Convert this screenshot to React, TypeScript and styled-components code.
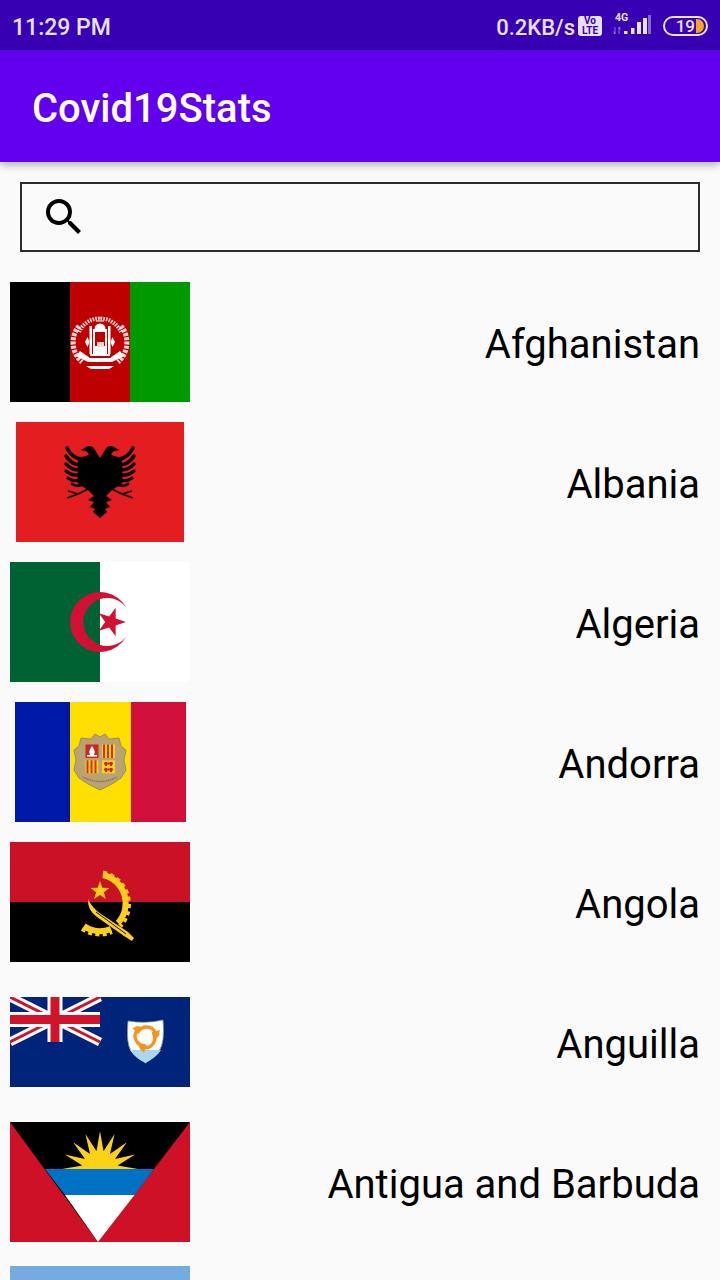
import React from "react";
import styled, { createGlobalStyle } from "styled-components";

const Global = createGlobalStyle`
  html, body { margin: 0; padding: 0; width: 720px; height: 1280px; overflow: hidden; background: #fafafa; }
  #root { width: 720px; height: 1280px; overflow: hidden; }
`;

const Screen = styled.div`
  width: 720px;
  height: 1280px;
  overflow: hidden;
  display: flex;
  flex-direction: column;
  background: #fafafa;
  font-family: Roboto, "Liberation Sans", sans-serif;
`;
const StatusBar = styled.div`
  height: 50px;
  flex: none;
  background: #3700b3;
  color: #e9e0f9;
  display: flex;
  align-items: center;
  justify-content: space-between;
  padding: 4px 12px 0 12px;
  box-sizing: border-box;
  font-size: 23px;
  font-weight: 500;
`;
const StatusRight = styled.div`
  display: flex;
  align-items: center;
  margin-top: -3px;
`;
const Speed = styled.span`
  font-size: 22px;
  margin-top: 3px;
`;
const VoLte = styled.div`
  width: 24px;
  height: 20px;
  margin-left: 3px;
  background: #e9e0f9;
  color: #3700b3;
  border-radius: 3px;
  display: flex;
  flex-direction: column;
  align-items: center;
  justify-content: center;
  font-size: 10px;
  line-height: 9.5px;
  font-weight: 700;
`;
const Signal = styled.div`
  width: 40px;
  height: 30px;
  margin-left: 10px;
  position: relative;
`;
const FourG = styled.span`
  position: absolute;
  left: 3px;
  top: 2px;
  font-size: 10.5px;
  line-height: 10px;
  font-weight: 700;
`;
const Battery = styled.div`
  width: 45px;
  height: 20px;
  margin-left: 11px;
  box-sizing: border-box;
  border: 2px solid #e9e0f9;
  border-radius: 10px;
  display: flex;
  align-items: center;
  justify-content: flex-end;
  padding-right: 2px;
  font-size: 17px;
  font-weight: 500;
  line-height: 16px;
`;
const BatteryCap = styled.div`
  width: 8px;
  height: 14px;
  margin-left: 1px;
  background: #f5a623;
  border-radius: 0 7px 7px 0;
`;
const AppBar = styled.header`
  height: 112px;
  flex: none;
  background: #6200ee;
  color: #fff;
  display: flex;
  align-items: center;
  padding: 4px 0 0 32px;
  box-sizing: border-box;
  font-size: 40px;
  font-weight: 500;
  box-shadow: 0 3px 8px rgba(0, 0, 0, 0.3);
  position: relative;
`;
const SearchBox = styled.div`
  flex: none;
  width: 680px;
  height: 70px;
  margin: 20px 0 20px 20px;
  box-sizing: border-box;
  border: 2px solid #2b2b2b;
  display: flex;
  align-items: center;
  padding-left: 18px;
`;
const List = styled.div`
  display: flex;
  flex-direction: column;
`;
const Row = styled.div`
  height: 140px;
  flex: none;
  display: flex;
  align-items: center;
  justify-content: space-between;
  padding: 0 20px 0 10px;
`;
const FlagSlot = styled.div`
  width: 180px;
  height: 120px;
  display: flex;
  align-items: center;
  justify-content: center;
  flex: none;
`;
const Name = styled.span`
  font-size: 40px;
  color: #000;
  line-height: 48px;
  position: relative;
  top: 3px;
`;

const Afghanistan = () => (
  <svg width="180" height="120" viewBox="0 0 180 120">
    <rect width="60" height="120" fill="#000" />
    <rect x="60" width="60" height="120" fill="#be0000" />
    <rect x="120" width="60" height="120" fill="#009900" />
    <path d="M69 50 A23 23 0 0 1 111 50" fill="none" stroke="#fff" strokeWidth="4" strokeDasharray="1.6 1.1" opacity="0.85" />
    <path d="M69 44 A26 26 0 0 0 72 80" fill="none" stroke="#fff" strokeWidth="5" strokeDasharray="3 1.2" opacity="0.85" />
    <path d="M111 44 A26 26 0 0 1 108 80" fill="none" stroke="#fff" strokeWidth="5" strokeDasharray="3 1.2" opacity="0.85" />
    <path d="M66 74 L78 80 L102 80 L114 74 L110 69 L100 76 L80 76 L70 69Z" fill="#fff" />
    <path d="M76 84 H104 L99 87 H81Z" fill="#fff" />
    <path d="M84.5 47 a5.5 5.5 0 0 1 11 0Z" fill="#fff" />
    <rect x="83" y="47" width="14" height="25" fill="#fff" />
    <rect x="85" y="50" width="10" height="14" fill="#be0000" />
    <rect x="87" y="60" width="7" height="5" fill="#f0d8d0" />
    <rect x="79.5" y="44" width="2.5" height="28" fill="#fff" />
    <rect x="98" y="44" width="2.5" height="28" fill="#fff" />
    <path d="M75 60 l2.5 -5 l2 5 l-2 5Z M105 60 l-2.5 -5 l-2 5 l2 5Z" fill="#fff" />
    <path d="M86 39 h8 M88 36 h4" stroke="#fff" strokeWidth="1.1" />
    <rect x="80" y="72" width="20" height="2" fill="#fff" />
  </svg>
);

const EagleHalf = () => (
  <g>
    <path d="M84 36 L89 28 Q91 23.5 96 24 L103.5 28 L97 29.5 L95 33 L102 35 L106 38 L106.5 61 L96 68 L90 74 L96 78 L90 80 L94 85 L89 87 L91 90 L84 96Z" fill="#000" />
    <g fill="none" stroke="#000" strokeLinecap="round">
      <path d="M103 37 Q112 36 117 26" strokeWidth="3.6" />
      <path d="M105 43 Q113 42 118 34" strokeWidth="3.4" />
      <path d="M105 48 Q113 48 118 42" strokeWidth="3.4" />
      <path d="M105 53 Q112 54 118 49" strokeWidth="3.2" />
      <path d="M105 58 Q111 60 116 56" strokeWidth="3" />
      <path d="M102 63 Q108 65 112 62" strokeWidth="2.8" />
    </g>
    <path d="M94 66 L106 72 L116 69 M106 72 L117 76" fill="none" stroke="#000" strokeWidth="1.8" />
  </g>
);

const Albania = () => (
  <svg width="168" height="120" viewBox="0 0 168 120">
    <rect width="168" height="120" fill="#e41e20" />
    <EagleHalf />
    <g transform="translate(168 0) scale(-1 1)">
      <EagleHalf />
    </g>
  </svg>
);

const starPoints = (cx: number, cy: number, r: number, inner: number, start: number) =>
  Array.from({ length: 10 }, (_, i) => {
    const a = start + (i * Math.PI) / 5;
    const q = i % 2 ? inner : r;
    return `${(cx + q * Math.cos(a)).toFixed(2)},${(cy + q * Math.sin(a)).toFixed(2)}`;
  }).join(" ");

const Algeria = () => (
  <svg width="180" height="120" viewBox="0 0 180 120">
    <rect width="180" height="120" fill="#fff" />
    <rect width="90" height="120" fill="#006233" />
    <path d="M116 45 A30 30 0 1 0 116 75 A24 24 0 1 1 116 45Z" fill="#d21034" />
    <polygon points={starPoints(101, 60, 15, 5.8, 0)} fill="#d21034" />
  </svg>
);

const Andorra = () => (
  <svg width="171" height="120" viewBox="0 0 171 120">
    <rect width="55" height="120" fill="#0018a8" />
    <rect x="55" width="61" height="120" fill="#fedf00" />
    <rect x="116" width="55" height="120" fill="#d0103a" />
    <path d="M76 37 L80 32 L85 35 L90 32 L94 37 L104 36 L106 44 L111 48 L109 58 L111 68 L106 76 L97 82 L85 88 L73 82 L64 76 L59 68 L61 58 L59 48 L64 44 L66 36Z" fill="#b9a374" stroke="#8f7f5a" strokeWidth="0.8" />
    <rect x="70.5" y="42.5" width="13" height="13.5" fill="#c8281e" />
    <path d="M77 44 Q81 49 79 53 H75 Q73 49 77 44Z" fill="#fff" />
    <rect x="72" y="53" width="10" height="1.6" fill="#fff" />
    <rect x="87" y="42.5" width="13" height="13.5" fill="#fcd116" />
    <path d="M89 42.5 V56 M93 42.5 V56 M97 42.5 V56" stroke="#d0301e" strokeWidth="2" />
    <rect x="70.5" y="58.3" width="13" height="13" fill="#fcd116" />
    <path d="M72.5 58.3 V71.3 M76.5 58.3 V71.3 M80.5 58.3 V71.3" stroke="#d0301e" strokeWidth="2" />
    <rect x="87" y="58.3" width="13" height="13" fill="#fcd116" />
    <path d="M89 61.5 H98 M91 60 V64 M96 60 V64 M89 67.5 H98 M91 66 V70 M96 66 V70" stroke="#c8281e" strokeWidth="2" />
    <path d="M68 75 Q85 84 102 75" fill="none" stroke="#7f7050" strokeWidth="1.4" strokeDasharray="1.5 .8" />
  </svg>
);

const Angola = () => (
  <svg width="180" height="120" viewBox="0 0 180 120">
    <rect width="180" height="60" fill="#cb1126" />
    <rect y="60" width="180" height="60" fill="#000" />
    <g fill="none" stroke="#ffcd1c">
      <path d="M93 33 A29 29 0 0 1 108 81" strokeWidth="6" />
      <path d="M93 31 A32 32 0 0 1 110 84" strokeWidth="5" strokeDasharray="4 3.2" />
      <path d="M74 84 A28 28 0 0 0 101 87" strokeWidth="6" />
      <path d="M72 87 A32 32 0 0 0 102 90" strokeWidth="4" strokeDasharray="4 3.2" />
    </g>
    <polygon points={starPoints(90, 49, 10, 4, -Math.PI / 2)} fill="#ffcd1c" />
    <path d="M78 57 Q77 68 87 75 L114 94 L122 99 L124 96 L118 90 L91 72 Q82 66 78 57Z" fill="#ffcd1c" />
    <path d="M86 70 L116 92" stroke="#000" strokeWidth="0.9" />
  </svg>
);

const Dolphin = () => (
  <g>
    <path d="M128 35 Q133 28 141 31 Q145 33 146 38" fill="none" stroke="#f7941e" strokeWidth="3.4" strokeLinecap="round" />
    <path d="M144 35 L150 33 L148 40 L145 41Z M129 33 L125 29 L132 30Z" fill="#f7941e" />
  </g>
);

const Anguilla = () => (
  <svg width="180" height="90" viewBox="0 0 180 90">
    <rect width="180" height="90" fill="#00247a" />
    <path d="M0 0 L90 45 M90 0 L0 45" stroke="#fff" strokeWidth="9" />
    <path d="M0 0 L45 22.5 M45 22.5 L90 45 M90 0 L45 22.5 M45 22.5 L0 45" stroke="#cf142b" strokeWidth="3" />
    <rect x="37.5" width="15" height="45" fill="#fff" />
    <rect y="15" width="90" height="15" fill="#fff" />
    <rect x="40.5" width="9" height="45" fill="#cf142b" />
    <rect y="18" width="90" height="9" fill="#cf142b" />
    <path d="M118 24 Q136 27 153 23 Q155 46 149 54 Q144 61 135.5 66 Q126 61 121 54 Q116 46 118 24Z" fill="#fff" stroke="#7f9a7f" strokeWidth="0.8" />
    <path d="M120 53 H151 Q146 61 135.5 65.5 Q125 61 120 53Z" fill="#a8d8f0" />
    <Dolphin />
    <g transform="rotate(120 135.5 40)"><Dolphin /></g>
    <g transform="rotate(240 135.5 40)"><Dolphin /></g>
  </svg>
);

const sunPoints = Array.from({ length: 17 }, (_, i) => {
  const a = Math.PI + (i * Math.PI) / 16;
  const q = i % 2 ? 18 : 38;
  return `${(90 + q * Math.cos(a)).toFixed(2)},${(47 + q * Math.sin(a)).toFixed(2)}`;
}).join(" ");

const Antigua = () => (
  <svg width="180" height="120" viewBox="0 0 180 120">
    <rect width="180" height="120" fill="#ce1126" />
    <polygon points="0,0 180,0 88,120" fill="#000" />
    <polygon points={sunPoints} fill="#fcd116" />
    <polygon points="35,47 144,47 124.5,73 55,73" fill="#0072c6" />
    <polygon points="55,73 124.5,73 88,120" fill="#fff" />
  </svg>
);

const Argentina = () => (
  <svg width="180" height="113" viewBox="0 0 180 113">
    <rect width="180" height="38" fill="#74acdf" />
    <rect y="38" width="180" height="37" fill="#fff" />
    <rect y="75" width="180" height="38" fill="#74acdf" />
  </svg>
);

const countries: { name?: string; flag: React.ReactNode }[] = [
  { name: "Afghanistan", flag: <Afghanistan /> },
  { name: "Albania", flag: <Albania /> },
  { name: "Algeria", flag: <Algeria /> },
  { name: "Andorra", flag: <Andorra /> },
  { name: "Angola", flag: <Angola /> },
  { name: "Anguilla", flag: <Anguilla /> },
  { name: "Antigua and Barbuda", flag: <Antigua /> },
  { flag: <Argentina /> },
];

export default function App() {
  return (
    <Screen>
      <Global />
      <StatusBar>
        <span>11:29 PM</span>
        <StatusRight>
          <Speed>0.2KB/s</Speed>
          <VoLte>
            <span>Vo</span>
            <span>LTE</span>
          </VoLte>
          <Signal>
            <FourG>4G</FourG>
            <svg width="40" height="30" viewBox="0 0 40 30">
              <path d="M3 16 V23 M1.5 20.5 L3 23 M7 16 V23 M7 16 L8.5 18.5" stroke="#e9e0f9" strokeWidth="1" opacity="0.5" fill="none" />
              <rect x="12" y="20" width="3.5" height="3" fill="#e9e0f9" />
              <rect x="19" y="17" width="3.5" height="6" fill="#e9e0f9" />
              <rect x="25" y="11" width="4" height="12" fill="#e9e0f9" />
              <rect x="31" y="7" width="4" height="16" fill="#e9e0f9" />
              <rect x="36" y="4" width="3" height="19" fill="#e9e0f9" opacity="0.45" />
            </svg>
          </Signal>
          <Battery>
            <span>19</span>
            <BatteryCap />
          </Battery>
        </StatusRight>
      </StatusBar>
      <AppBar>Covid19Stats</AppBar>
      <SearchBox>
        <svg width="48" height="48" viewBox="0 0 24 24" fill="#000">
          <path d="M15.5 14h-.79l-.28-.27A6.471 6.471 0 0 0 16 9.5 6.5 6.5 0 1 0 9.5 16c1.61 0 3.09-.59 4.23-1.57l.27.28v.79l5 4.99L20.49 19l-4.99-5zm-6 0C7.01 14 5 11.99 5 9.5S7.01 5 9.5 5 14 7.01 14 9.5 11.99 14 9.5 14z" />
        </svg>
      </SearchBox>
      <List>
        {countries.map((c, i) => (
          <Row key={i}>
            <FlagSlot>{c.flag}</FlagSlot>
            {c.name && <Name>{c.name}</Name>}
          </Row>
        ))}
      </List>
    </Screen>
  );
}
